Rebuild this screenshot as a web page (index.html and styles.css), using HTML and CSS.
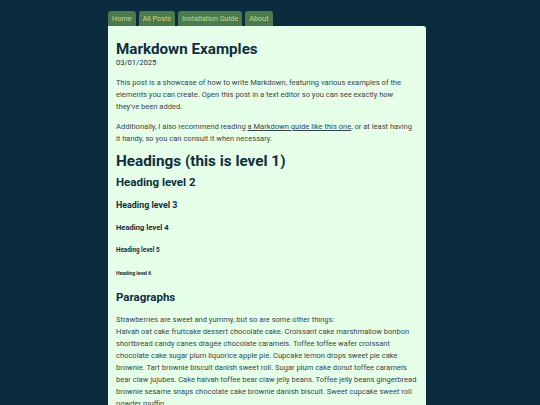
FILE: index.html
```html
<!DOCTYPE html>
<html lang="en">
<head>
<meta charset="utf-8">
<title>Markdown Examples</title>
<link rel="stylesheet" href="styles.css">
</head>
<body>
<div class="page">
  <nav class="tabs">
    <a class="tab" href="#">Home</a>
    <a class="tab" href="#">All Posts</a>
    <a class="tab" href="#">Installation Guide</a>
    <a class="tab" href="#">About</a>
  </nav>
  <main class="card">
    <h1 class="title">Markdown Examples</h1>
    <div class="date">03/01/2025</div>
    <article class="post">
      <p>This post is a showcase of how to write Markdown, featuring various examples of the elements you can create. Open this post in a text editor so you can see exactly how they've been added.</p>
      <p>Additionally, I also recommend reading <a class="link" href="#">a Markdown guide like this one</a>, or at least having it handy, so you can consult it when necessary.</p>
      <h1>Headings (this is level 1)</h1>
      <h2>Heading level 2</h2>
      <h3>Heading level 3</h3>
      <h4>Heading level 4</h4>
      <h5>Heading level 5</h5>
      <h6>Heading level 6</h6>
      <h2>Paragraphs</h2>
      <p>Strawberries are sweet and yummy, but so are some other things:<br>Halvah oat cake fruitcake dessert chocolate cake. Croissant cake marshmallow bonbon shortbread candy canes dragée chocolate caramels. Toffee toffee wafer croissant chocolate cake sugar plum liquorice apple pie. Cupcake lemon drops sweet pie cake brownie. Tart brownie biscuit danish sweet roll. Sugar plum cake donut toffee caramels bear claw jujubes. Cake halvah toffee bear claw jelly beans. Toffee jelly beans gingerbread brownie sesame snaps chocolate cake brownie danish biscuit. Sweet cupcake sweet roll powder muffin.</p>
    </article>
  </main>
</div>
</body>
</html>
```

FILE: styles.css
```css
html, body {
  margin: 0;
  padding: 0;
  background: #0b2b3f;
  height: 100%;
  overflow: hidden;
}

body {
  font-family: Roboto, "Liberation Sans", sans-serif;
  font-size: 7.55px;
  line-height: 12px;
  color: #38464a;
}

.page {
  width: 318px;
  margin: 11px 0 0 108px;
}

.tabs {
  display: flex;
  gap: 3px;
}

.tab {
  display: block;
  height: 15px;
  line-height: 16px;
  padding: 0 4px;
  background: #4b7a50;
  color: #c9d97c;
  text-decoration: none;
  font-size: 7.25px;
  border-radius: 3px 3px 0 0;
}

.card {
  background: #e6ffe8;
  border-radius: 0 3px 0 0;
  padding: 15px 8px 20px;
  min-height: 400px;
}

.title {
  margin: 0;
  font-size: 15.2px;
  line-height: 16px;
  font-weight: 700;
  color: #0f2f3d;
}

.date {
  margin: 0 0 8px;
  color: #0f2f3d;
}

.post p {
  margin: 0 0 8px;
}

.link {
  color: inherit;
  text-decoration: underline;
}

.post h1, .post h2, .post h3, .post h4, .post h5, .post h6 {
  color: #0f2f3d;
  font-weight: 700;
  line-height: 1;
  margin-bottom: 0;
}

.post h1 { font-size: 15.3px; margin-top: 8.5px; }
.post h2 { font-size: 11.5px; margin-top: 8.3px; margin-bottom: 10px; }
.post h3 { font-size: 8.9px; margin-top: 12px; }
.post h4 { font-size: 7.6px; margin-top: 14px; }
.post h5 { font-size: 6.3px; margin-top: 15.5px; }
.post h6 { font-size: 5.1px; margin-top: 18.5px; margin-bottom: 16px; }
```
